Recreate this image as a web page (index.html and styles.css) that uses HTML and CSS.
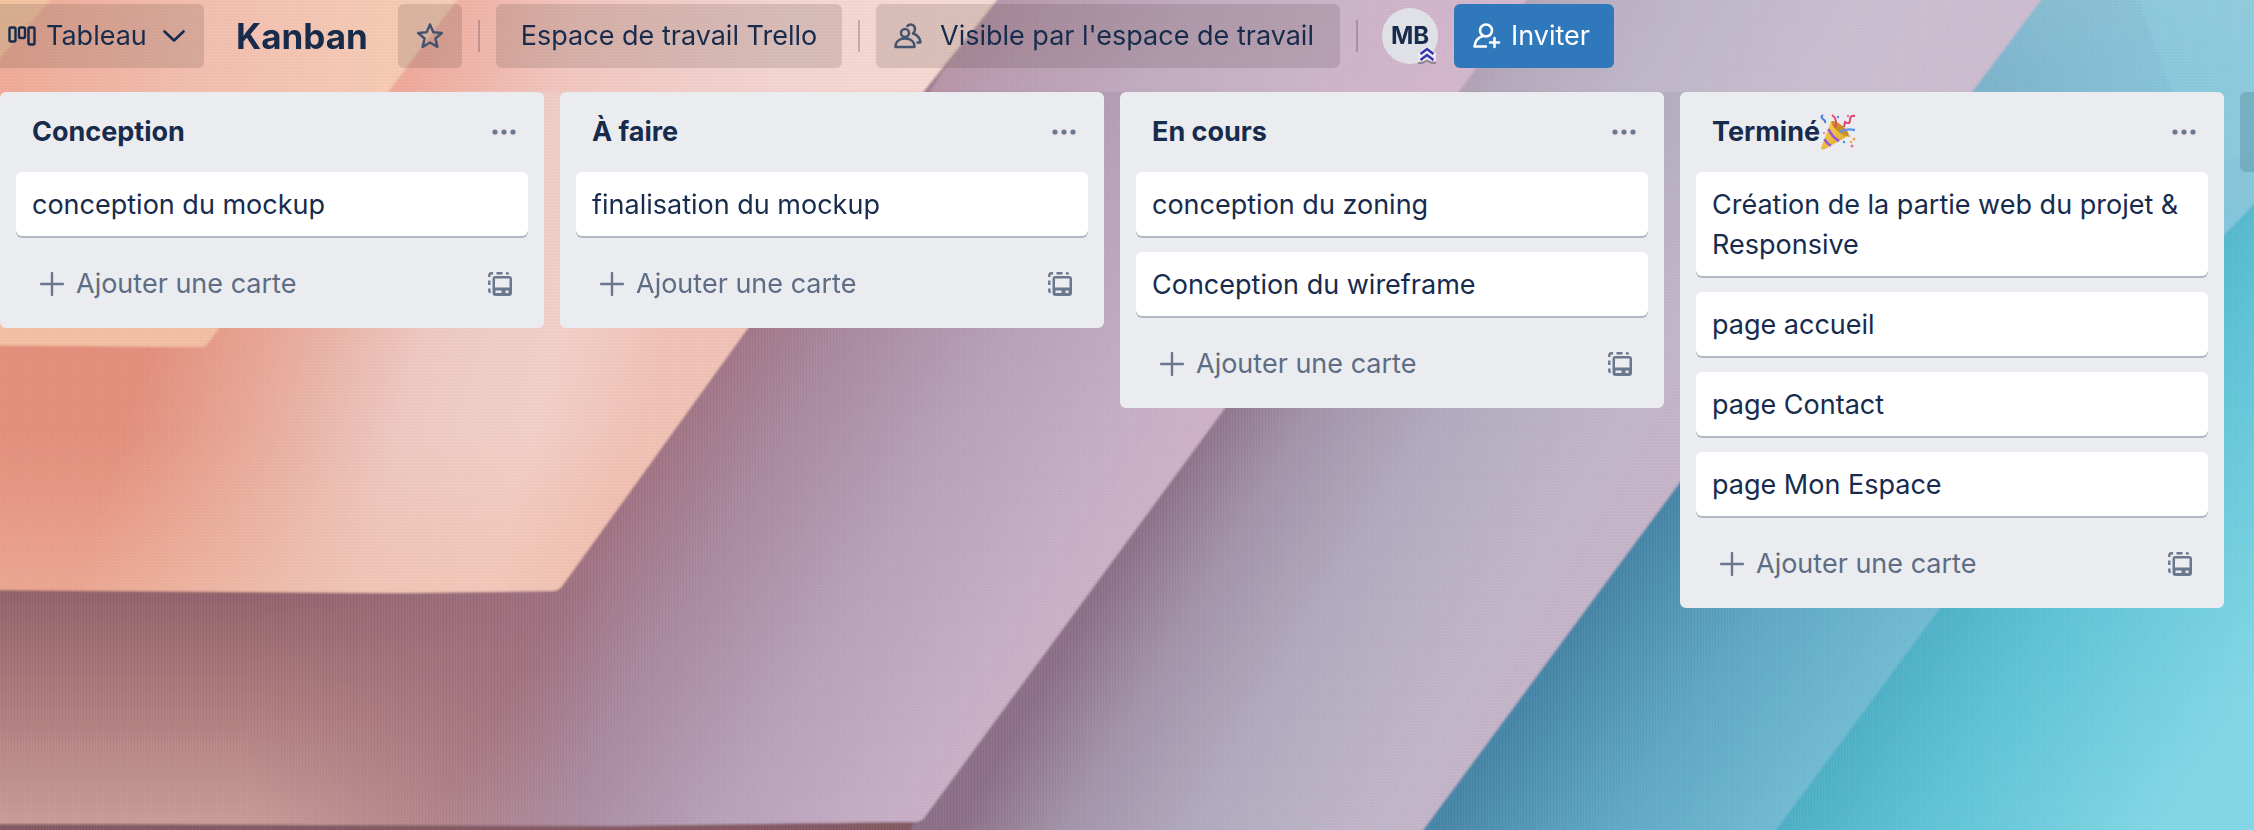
FILE: index.html
```html
<!DOCTYPE html>
<html lang="fr">
<head>
<meta charset="utf-8">
<title>Kanban | Trello</title>
<meta name="viewport" content="width=device-width, initial-scale=1">
<link rel="stylesheet" href="styles.css">
</head>
<body>
<svg class="wallpaper" viewBox="0 0 2254 830" preserveAspectRatio="none" aria-hidden="true">
  <defs>
    <linearGradient id="gTeal" gradientUnits="userSpaceOnUse" x1="1960" y1="500" x2="2254" y2="690">
      <stop offset="0" stop-color="#46a9c0"/><stop offset=".4" stop-color="#5bc3d6"/><stop offset="1" stop-color="#80d8e6"/>
    </linearGradient>
    <linearGradient id="gBlue" gradientUnits="userSpaceOnUse" x1="1600" y1="600" x2="1840" y2="770">
      <stop offset="0" stop-color="#4384a6"/><stop offset=".45" stop-color="#5ba6c4"/><stop offset="1" stop-color="#70bdd4"/>
    </linearGradient>
    <linearGradient id="gBlueTop" gradientUnits="userSpaceOnUse" x1="0" y1="0" x2="0" y2="500">
      <stop offset="0" stop-color="#9fd3e3" stop-opacity=".7"/><stop offset="1" stop-color="#9fd3e3" stop-opacity="0"/>
    </linearGradient>
    <linearGradient id="gLilac" gradientUnits="userSpaceOnUse" x1="1110" y1="570" x2="1500" y2="800">
      <stop offset="0" stop-color="#8a6d84"/><stop offset=".2" stop-color="#a192a8"/><stop offset=".45" stop-color="#b0a9bd"/><stop offset=".8" stop-color="#c0b6c9"/><stop offset="1" stop-color="#c6b3c8"/>
    </linearGradient>
    <linearGradient id="gMauve" gradientUnits="userSpaceOnUse" x1="640" y1="470" x2="1060" y2="720">
      <stop offset="0" stop-color="#9f7080"/><stop offset=".2" stop-color="#a7869b"/><stop offset=".5" stop-color="#b6a0b7"/><stop offset=".8" stop-color="#c6aec5"/><stop offset="1" stop-color="#d0b1c6"/>
    </linearGradient>
    <linearGradient id="gMauveLow" gradientUnits="userSpaceOnUse" x1="0" y1="590" x2="0" y2="830">
      <stop offset="0" stop-color="#8f5f68"/><stop offset=".5" stop-color="#ae7b7b"/><stop offset="1" stop-color="#c99d96"/>
    </linearGradient>
    <linearGradient id="gFade" gradientUnits="userSpaceOnUse" x1="250" y1="650" x2="600" y2="670">
      <stop offset="0" stop-color="#fff"/><stop offset="1" stop-color="#000"/>
    </linearGradient>
    <mask id="mLow"><rect x="-20" width="2274" height="850" fill="url(#gFade)"/></mask>
    <linearGradient id="gRose" gradientUnits="userSpaceOnUse" x1="150" y1="340" x2="620" y2="480">
      <stop offset="0" stop-color="#e38d78"/><stop offset=".25" stop-color="#e8a898"/><stop offset=".55" stop-color="#eecac2"/><stop offset=".8" stop-color="#f2d0c7"/><stop offset="1" stop-color="#f1c2b5"/>
    </linearGradient>
    <linearGradient id="gRoseLow" gradientUnits="userSpaceOnUse" x1="0" y1="430" x2="0" y2="590">
      <stop offset="0" stop-color="#f2b79d" stop-opacity="0"/><stop offset="1" stop-color="#f4bfa8" stop-opacity=".5"/>
    </linearGradient>
    <linearGradient id="gRoseTop" gradientUnits="userSpaceOnUse" x1="420" y1="0" x2="930" y2="90">
      <stop offset="0" stop-color="#efa899"/><stop offset=".3" stop-color="#f2c6bd"/><stop offset=".7" stop-color="#f3d4d0"/><stop offset="1" stop-color="#f6d9d1"/>
    </linearGradient>
    <linearGradient id="gPeach" gradientUnits="userSpaceOnUse" x1="0" y1="40" x2="420" y2="70">
      <stop offset="0" stop-color="#efa995"/><stop offset=".5" stop-color="#f3bfae"/><stop offset="1" stop-color="#f6ccb4"/>
    </linearGradient>
    <filter id="soft" x="-5%" y="-5%" width="110%" height="110%"><feGaussianBlur stdDeviation="1"/></filter>
    <pattern id="weave" width="6" height="6" patternUnits="userSpaceOnUse">
      <path d="M1 0V6M4 0V6" stroke="#fff" stroke-opacity=".09"/>
      <path d="M0 2H6M0 5H6" stroke="#402040" stroke-opacity=".045"/>
    </pattern>
  </defs>
  <g filter="url(#soft)">
    <rect x="-20" y="-20" width="2300" height="880" fill="url(#gTeal)"/>
    <path d="M-20-20H2280V176L2254 204 2224 235 1940 608 1765 845H-20Z" fill="url(#gBlue)"/>
    <path d="M1900-20H2280V176L2254 204 2224 235 1940 608H1600Z" fill="url(#gBlueTop)"/>
    <path d="M2132-20H2280V140L2200 170Z" fill="#8fd0df" fill-opacity=".45"/>
    <path d="M-20-20H2056L1972 92 1680 482 1412 845H-20Z" fill="url(#gLilac)"/>
    <path d="M1540-20H2056L1972 92H1459Z" fill="#d3cad9" fill-opacity=".4"/>
    <path d="M-20-20H1541L1459 92 1225 408 924 818Q921 822 914 822L620 826-20 824Z" fill="url(#gMauve)"/>
    <path d="M1000-20H1541L1459 92H930Z" fill="#d9c1d2" fill-opacity=".35"/>
    <path d="M-20 580H640L620 826-20 824Z" fill="url(#gMauveLow)" mask="url(#mLow)"/>
    <path d="M-20 824 620 826 914 822 905 845H-20Z" fill="#81565f"/>
    <path d="M-20-20H1013L923 92 748 328 562 586Q558 591 552 591L400 593-20 590Z" fill="url(#gRose)"/>
    <path d="M-20 430H675L562 586Q558 591 552 591L400 593-20 590Z" fill="url(#gRoseLow)"/>
    <path d="M-20-20H1013L923 92H-20Z" fill="url(#gRoseTop)"/>
    <path d="M-20-20H472L388 92 209 342Q205 347 200 347L-20 345Z" fill="url(#gPeach)"/>
    <path d="M-20 300H239L209 342Q205 347 200 347L-20 345Z" fill="#f3bfa0"/>
    <path d="M-20-20H66L50 0 0 58-20 80Z" fill="#f4c39f"/>
  </g>
  <rect width="2254" height="830" fill="url(#weave)"/>
</svg>

<svg class="sprite" aria-hidden="true">
  <symbol id="i-dots" viewBox="0 0 24 6"><circle cx="3" cy="3" r="2.600"/><circle cx="12" cy="3" r="2.600"/><circle cx="21" cy="3" r="2.600"/></symbol>
  <symbol id="i-plus" viewBox="0 0 24 24"><path d="M12 1V23M1 12H23" fill="none" stroke="currentColor" stroke-width="2.400" stroke-linecap="round"/></symbol>
  <symbol id="i-template" viewBox="0 0 24 24">
    <path d="M1.300 5V3.500Q1.300 1.300 3.500 1.300H5M8.500 1.300H14.500M18 1.300Q20 1.300 20.500 2.300M1.300 8.500V13M1.300 16.500V18.500Q1.300 20 2.500 20.500" fill="none" stroke="currentColor" stroke-width="2.400"/>
    <path fill-rule="evenodd" d="M7.500 4H21Q24 4 24 7V21Q24 24 21 24H7.500Q4.500 24 4.500 21V7Q4.500 4 7.500 4ZM7 6.500V15.500H21.500V6.500ZM7.500 18.500V21H13.500V18.500ZM17.500 18.500V21H20.500V18.500Z"/>
  </symbol>
</svg>

<header class="bar">
  <button class="btn view" type="button">
    <svg class="i-board" viewBox="0 0 28 20" fill="none" stroke="currentColor" stroke-width="2.400"><rect x="1.500" y="1.500" width="6" height="14" rx="1.500"/><rect x="11" y="1.500" width="6" height="10.500" rx="1.500"/><rect x="20.500" y="1.500" width="6" height="17" rx="1.500"/></svg>
    <span>Tableau</span>
    <svg class="i-chev" viewBox="0 0 22 12" fill="none" stroke="currentColor" stroke-width="2.600" stroke-linecap="round" stroke-linejoin="round"><path d="M1.500 1.500 11 10.500 20.500 1.500"/></svg>
  </button>
  <h1 class="name">Kanban</h1>
  <button class="btn star" type="button" aria-label="Ajouter aux favoris">
    <svg viewBox="0 0 28 28" fill="none" stroke="currentColor" stroke-width="2.500" stroke-linejoin="round"><path d="M14 2.500 17.300 10.300 25.800 11 19.400 16.500 21.400 24.800 14 20.500 6.600 24.800 8.600 16.500 2.200 11 10.700 10.300Z"/></svg>
  </button>
  <span class="rule"></span>
  <button class="btn space" type="button">Espace de travail Trello</button>
  <span class="rule"></span>
  <button class="btn vis" type="button">
    <svg viewBox="0 0 28 26" fill="none" stroke="currentColor" stroke-width="2.500" stroke-linecap="round" stroke-linejoin="round"><circle cx="11" cy="10" r="4"/><path d="M1.500 24H20.500C20.500 18.500 16.500 15.500 11 15.500S1.500 18.500 1.500 24Z"/><path d="M13.500 3C16 .500 21 1.500 21 6 21 8 20 9.500 19 10.500 23.500 12 26 14.500 26.500 19.500H23.500"/></svg>
    <span>Visible par l'espace de travail</span>
  </button>
  <span class="rule"></span>
  <button class="avatar" type="button">MB
    <svg class="badge" viewBox="0 0 18 18"><path d="M0 7 9 0 18 7V15H0Z" fill="#eceaf5"/><path d="M2.500 8 9 3 15.500 8M2.500 14 9 9 15.500 14" fill="none" stroke="#3433a8" stroke-width="2.400"/><path d="M0 17H4.500L9 14.500 13.500 17H18" fill="none" stroke="#8f8a96" stroke-width="2"/></svg>
  </button>
  <button class="btn invite" type="button">
    <svg viewBox="0 0 28 26" fill="none" stroke="currentColor" stroke-width="2.500" stroke-linecap="round" stroke-linejoin="round"><circle cx="13" cy="7.500" r="6"/><path d="M10 13C5 14.500 2 18 1.500 23.500H13M21.500 15V24M17 19.500H26"/></svg>
    <span>Inviter</span>
  </button>
</header>

<main class="board">
  <section class="list">
    <div class="head"><h2>Conception</h2><button type="button" aria-label="Menu de la liste"><svg><use href="#i-dots"/></svg></button></div>
    <a class="card" href="#">conception du mockup</a>
    <div class="foot"><button class="add" type="button"><svg><use href="#i-plus"/></svg>Ajouter une carte</button><button class="tpl" type="button" aria-label="Créer à partir d'un modèle"><svg><use href="#i-template"/></svg></button></div>
  </section>
  <section class="list">
    <div class="head"><h2>À faire</h2><button type="button" aria-label="Menu de la liste"><svg><use href="#i-dots"/></svg></button></div>
    <a class="card" href="#">finalisation du mockup</a>
    <div class="foot"><button class="add" type="button"><svg><use href="#i-plus"/></svg>Ajouter une carte</button><button class="tpl" type="button" aria-label="Créer à partir d'un modèle"><svg><use href="#i-template"/></svg></button></div>
  </section>
  <section class="list">
    <div class="head"><h2>En cours</h2><button type="button" aria-label="Menu de la liste"><svg><use href="#i-dots"/></svg></button></div>
    <a class="card" href="#">conception du zoning</a>
    <a class="card" href="#">Conception du wireframe</a>
    <div class="foot"><button class="add" type="button"><svg><use href="#i-plus"/></svg>Ajouter une carte</button><button class="tpl" type="button" aria-label="Créer à partir d'un modèle"><svg><use href="#i-template"/></svg></button></div>
  </section>
  <section class="list">
    <div class="head"><h2>Terminé<svg class="party" viewBox="0 0 36 36" role="img" aria-label="cotillons"><defs><linearGradient id="gCone" x1="0" y1="0" x2="1" y2="1"><stop offset="0" stop-color="#fbd65a"/><stop offset="1" stop-color="#d9a32c"/></linearGradient></defs><path d="M11 7 1 34Q1 36 4 35.500L28 22Q26 11 11 7Z" fill="url(#gCone)"/><ellipse cx="20" cy="14.500" rx="3.500" ry="11" transform="rotate(-50 20 14.500)" fill="#c98f24"/><path d="M8.500 15Q12 23 19 27M4.500 25Q7 30 11 31.500" fill="none" stroke="#9a55d6" stroke-width="2.600"/><path d="M12 1Q18 5 15 14" fill="none" stroke="#e8466b" stroke-width="2"/><path d="M20 18Q26 14 35 16" fill="none" stroke="#5a93ee" stroke-width="2.400"/><path d="M3 1Q0 3 3 5T5 9" fill="none" stroke="#4779e0" stroke-width="2"/><path d="M24 13 25 8Q30 11 30 6T35 2" fill="none" stroke="#e3426b" stroke-width="2"/><g fill="#4a8be8"><circle cx="18" cy="3" r="1.200"/><circle cx="24" cy="28" r="1.200"/></g><g fill="#e86aa0"><circle cx="28" cy="2" r="1.200"/><circle cx="32" cy="32" r="1.500"/><circle cx="4" cy="19" r="1"/></g><g fill="#f0a850"><circle cx="29" cy="22" r="1.300"/><circle cx="34" cy="25" r="1.500"/><circle cx="31" cy="28" r="1.300"/></g></svg></h2><button type="button" aria-label="Menu de la liste"><svg><use href="#i-dots"/></svg></button></div>
    <a class="card" href="#">Création de la partie web du projet &amp; Responsive</a>
    <a class="card" href="#">page accueil</a>
    <a class="card" href="#">page Contact</a>
    <a class="card" href="#">page Mon Espace</a>
    <div class="foot"><button class="add" type="button"><svg><use href="#i-plus"/></svg>Ajouter une carte</button><button class="tpl" type="button" aria-label="Créer à partir d'un modèle"><svg><use href="#i-template"/></svg></button></div>
  </section>
  <button class="newlist" type="button" aria-label="Ajouter une autre liste"></button>
</main>
</body>
</html>
```
FILE: styles.css
```css
* { box-sizing: border-box; }

body {
  margin: 0;
  min-height: 100vh;
  overflow: hidden;
  background: #b6a0b7;
  color: #172b4d;
  font-family: Inter, "Liberation Sans", sans-serif;
  font-size: 27px;
  line-height: 40px;
}

h1, h2 { margin: 0; font-size: inherit; font-weight: 700; }

button {
  margin: 0;
  padding: 0;
  border: 0;
  background: none;
  color: inherit;
  font: inherit;
  cursor: pointer;
}

svg { display: block; fill: currentColor; flex: none; }

.wallpaper {
  position: fixed;
  inset: 0;
  z-index: -1;
  width: 100%;
  height: 100%;
}

.sprite { position: absolute; width: 0; height: 0; }

.bar {
  display: flex;
  align-items: center;
  padding-top: 4px;
  white-space: nowrap;
}

.bar svg { fill: none; }

.btn {
  display: flex;
  align-items: center;
  height: 64px;
  border-radius: 6px;
  background: rgba(60, 50, 40, 0.15);
}

.view { width: 204px; padding-left: 8px; gap: 10px; border-radius: 0 6px 6px 0; }
.i-board { width: 28px; height: 20px; }
.i-chev { width: 22px; height: 12px; margin-left: 6px; }

.name { width: 194px; padding-left: 32px; font-size: 35px; }

.star { width: 64px; justify-content: center; color: #44546f; }
.star svg { width: 28px; height: 28px; }

.rule {
  width: 2px;
  height: 32px;
  margin: 0 16px;
  background: rgba(60, 40, 60, 0.25);
}

.space { width: 346px; justify-content: center; }

.vis { width: 464px; padding-left: 18px; gap: 18px; }
.vis svg { width: 28px; height: 26px; color: #44546f; }

.avatar {
  position: relative;
  width: 56px;
  height: 56px;
  margin: 0 16px 0 8px;
  border-radius: 50%;
  background: #dfe1e6;
  font-size: 24px;
  font-weight: 700;
}

.bar .badge { position: absolute; right: 2px; bottom: 0; width: 18px; height: 18px; }

.invite { width: 160px; padding-left: 19px; gap: 10px; background: #2f78bb; color: #fff; }
.invite svg { width: 28px; height: 26px; }

.board {
  display: flex;
  align-items: flex-start;
  gap: 16px;
  padding-top: 24px;
  overflow: hidden;
}

.list {
  display: flex;
  flex: none;
  flex-direction: column;
  gap: 16px;
  width: 544px;
  padding: 16px 16px 12px;
  border-radius: 6px;
  background: #ebecf0;
}

.head { display: flex; align-items: center; justify-content: space-between; height: 48px; padding: 0 12px 0 16px; }
.head h2 { display: flex; align-items: center; }
.head button svg { width: 24px; height: 6px; color: #6b778c; }
.party { width: 36px; height: 36px; }

.card {
  padding: 13px 16px 11px;
  border-radius: 6px;
  background: #fff;
  box-shadow: 0 2px 0 #b1b8c5;
  color: inherit;
  text-decoration: none;
}

.foot { display: flex; align-items: center; justify-content: space-between; padding: 12px 16px 12px 24px; color: #5e6c84; }
.add { display: flex; align-items: center; gap: 12px; }
.add svg, .tpl svg { width: 24px; height: 24px; color: #6b778c; }

.newlist {
  flex: 1 0 14px;
  height: 80px;
  border-radius: 6px 0 0 6px;
  background: rgba(80, 130, 150, 0.35);
}
```
